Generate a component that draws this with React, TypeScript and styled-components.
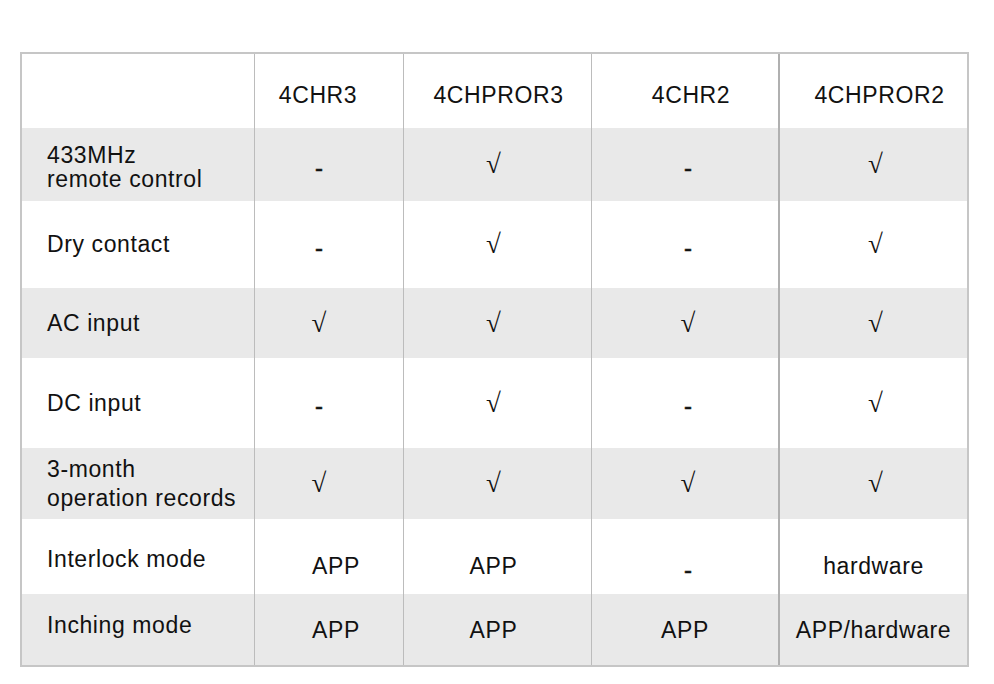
import React from 'react'
import styled, { createGlobalStyle } from 'styled-components'

const GlobalStyle = createGlobalStyle`
  html, body {
    margin: 0;
    padding: 0;
    background: #ffffff;
  }
  body {
    font-family: "Liberation Sans", Arial, sans-serif;
    color: #111111;
  }
`

const COLS = '232px 149px 188px 187px 189px'

type TCell = { text: string; dx?: number }
type TRow = {
  label: string[]
  height: number
  gray: boolean
  labelDy?: number
  labelGap?: number
  valueDy?: number
  cells: TCell[]
}

const headers: TCell[] = [
  { text: '4CHR3', dx: -11 },
  { text: '4CHPROR3', dx: 1 },
  { text: '4CHR2', dx: 6 },
  { text: '4CHPROR2', dx: 6 },
]

// offsets for the marks in each column, measured off the original
const markDx = [-10, -4, 3, 2]
const appDx = [7, -4, 0, 0]

const mk = (vals: string[]): TCell[] =>
  vals.map((v, i) => ({ text: v, dx: v === '√' || v === '-' ? markDx[i] : appDx[i] }))

const rows: TRow[] = [
  { label: ['433MHz', 'remote control'], height: 73, gray: true, labelDy: 2, cells: mk(['-', '√', '-', '√']) },
  { label: ['Dry contact'], height: 87, gray: false, labelDy: -1, cells: mk(['-', '√', '-', '√']) },
  { label: ['AC input'], height: 70, gray: true, cells: mk(['√', '√', '√', '√']) },
  { label: ['DC input'], height: 90, gray: false, cells: mk(['-', '√', '-', '√']) },
  { label: ['3-month', 'operation records'], height: 71, gray: true, labelDy: 0, labelGap: 5, cells: mk(['√', '√', '√', '√']) },
  { label: ['Interlock mode'], height: 75, gray: false, labelDy: 2, valueDy: 10, cells: mk(['APP', 'APP', '-', 'hardware']) },
  { label: ['Inching mode'], height: 71, gray: true, labelDy: -5, valueDy: 1, cells: mk(['APP', 'APP', 'APP', 'APP/hardware']) },
]

const Page = styled.div`
  padding: 52px 0 0 20px;
  width: 994px;
  height: 684px;
  box-sizing: border-box;
`

const Table = styled.div`
  width: 949px;
  border: 2px solid #c6c6c6;
  box-sizing: border-box;
  display: flex;
  flex-direction: column;
`

const Row = styled.div<{ $h: number; $gray: boolean }>`
  display: grid;
  grid-template-columns: ${COLS};
  height: ${(p) => p.$h}px;
  background: ${(p) => (p.$gray ? '#e9e9e9' : '#ffffff')};
`

const LabelCell = styled.div<{ $dy: number; $gap: number }>`
  display: flex;
  flex-direction: column;
  justify-content: center;
  gap: ${(p) => p.$gap}px;
  padding-left: 25px;
  font-size: 23px;
  letter-spacing: 0.6px;
  line-height: 24px;
  transform: translateY(${(p) => p.$dy}px);
`

const ValueCell = styled.div<{ $thick: boolean }>`
  display: flex;
  align-items: center;
  justify-content: center;
  border-left: ${(p) => (p.$thick ? '2px solid #b0b0b0' : '1px solid #bcbcbc')};
`

const Value = styled.span<{ $dx: number; $dy: number; $mark: boolean }>`
  display: inline-block;
  font-family: ${(p) => (p.$mark ? '"Liberation Serif", "DejaVu Serif", serif' : '"Liberation Sans", Arial, sans-serif')};
  font-size: ${(p) => (p.$mark ? '27px' : '23px')};
  letter-spacing: ${(p) => (p.$mark ? '0' : '0.6px')};
  line-height: 25px;
  transform: translate(${(p) => p.$dx}px, ${(p) => p.$dy}px);
`

const Dash = styled.span<{ $dx: number; $dy: number }>`
  display: inline-block;
  font-size: 24px;
  -webkit-text-stroke: 0.5px #111111;
  transform: translate(${(p) => p.$dx}px, ${(p) => p.$dy + 3}px);
`

const Cell = ({ cell, index, dy }: { cell: TCell; index: number; dy: number }) => (
  <ValueCell $thick={index === 3}>
    {cell.text === '-' ? (
      <Dash $dx={cell.dx || 0} $dy={dy}>-</Dash>
    ) : (
      <Value $dx={cell.dx || 0} $dy={dy} $mark={cell.text === '√'}>
        {cell.text}
      </Value>
    )}
  </ValueCell>
)

const App = () => {
  return (
    <Page>
      <GlobalStyle />
      <Table>
        <Row $h={74} $gray={false}>
          <LabelCell $dy={0} $gap={0} />
          {headers.map((h, i) => (
            <Cell key={h.text} cell={h} index={i} dy={4} />
          ))}
        </Row>
        {rows.map((r) => (
          <Row key={r.label.join(' ')} $h={r.height} $gray={r.gray}>
            <LabelCell $dy={r.labelDy || 0} $gap={r.labelGap || 0}>
              {r.label.map((l) => (
                <span key={l}>{l}</span>
              ))}
            </LabelCell>
            {r.cells.map((c, i) => (
              <Cell key={i} cell={c} index={i} dy={r.valueDy || 0} />
            ))}
          </Row>
        ))}
      </Table>
    </Page>
  )
}

export default App
